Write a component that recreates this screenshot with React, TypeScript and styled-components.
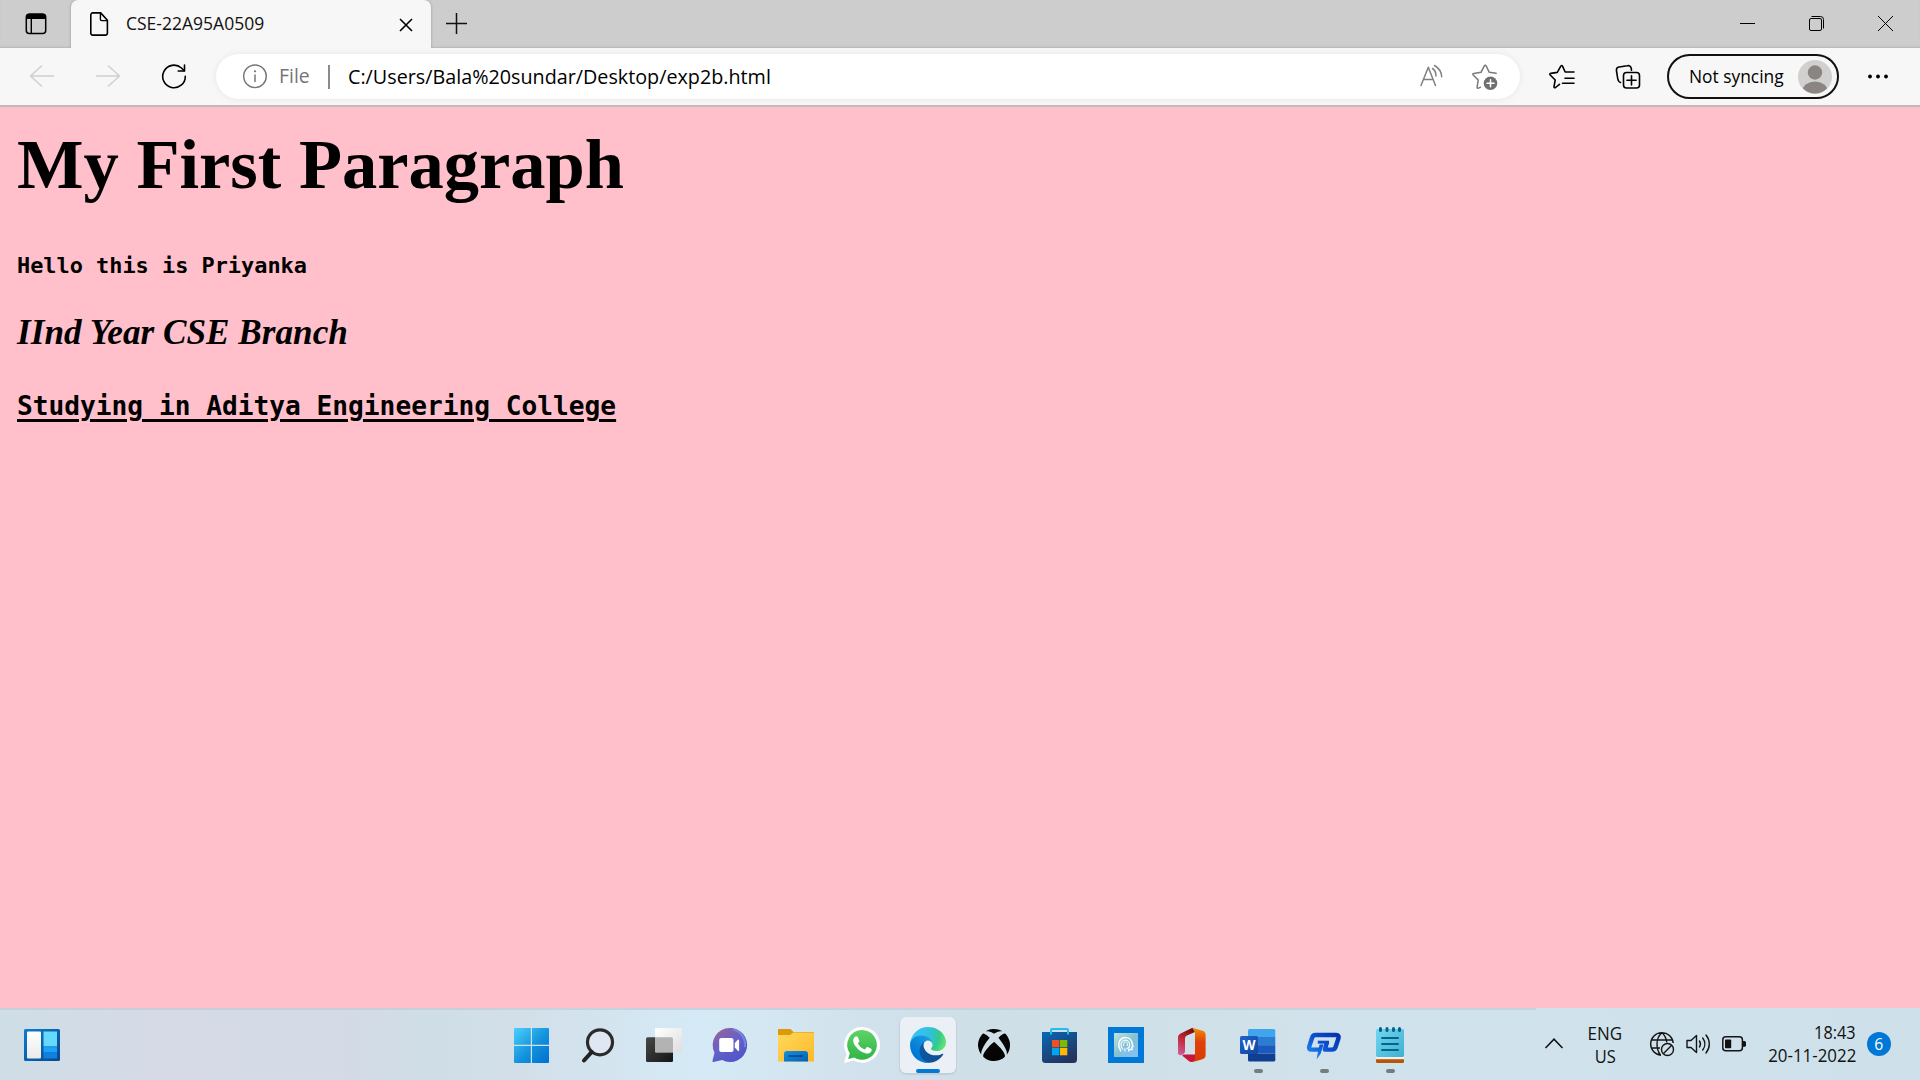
import React from 'react';
import styled, { createGlobalStyle } from 'styled-components';
import { FaXbox } from 'react-icons/fa';

const Global = createGlobalStyle`
  * { box-sizing: border-box; }
  body { margin: 0; overflow: hidden; }
`;

const Screen = styled.div`
  width: 1920px;
  height: 1080px;
  display: flex;
  flex-direction: column;
  overflow: hidden;
  font-family: "Open Sans", "Noto Sans", sans-serif;
  color: #000;
`;

/* One line of interface text, squeezed horizontally to a humanist UI width. */
const Label = styled.span<{ $size: number; $squeeze: number; $color?: string; $end?: boolean; $mid?: boolean }>`
  display: block;
  white-space: nowrap;
  font-size: ${p => p.$size}px;
  line-height: 24px;
  color: ${p => p.$color ?? '#000'};
  transform: scaleX(${p => p.$squeeze});
  transform-origin: ${p => (p.$end ? 'right' : p.$mid ? 'center' : 'left')} center;
`;

const Svg = styled.svg<{ $w: number; $h: number }>`
  display: block;
  flex: none;
  width: ${p => p.$w}px;
  height: ${p => p.$h}px;
  overflow: visible;
  fill: none;
`;

/* ---------- Tab strip ---------- */
const TabStrip = styled.header`
  height: 48px;
  flex: none;
  display: flex;
  background: #cdcdcd;
  box-shadow: inset 0 -2px 2px -1px #b5b5b5;
`;
const TabActions = styled.div`
  width: 71px;
  padding: 13px 0 0 25px;
`;
const Tab = styled.div`
  width: 360px;
  height: 48px;
  display: flex;
  align-items: flex-start;
  padding: 12px 18px 0 19px;
  background: #f7f7f7;
  border-radius: 7px 7px 0 0;
  box-shadow: 0 0 3px rgba(0, 0, 0, 0.25);
  clip-path: inset(0 -4px 0 -4px);
`;
const TabTitle = styled.div`
  width: 273px;
  margin: -1px 0 0 17px;
`;
const CloseTab = styled.div`
  padding-top: 6px;
`;
const NewTab = styled.div`
  padding: 13px 0 0 15px;
  flex: 1;
`;
const WindowButtons = styled.div`
  display: grid;
  grid-template-columns: repeat(3, 69px);
  justify-items: center;
  padding-top: 16px;
  width: 207px;
`;

/* ---------- Toolbar ---------- */
const Toolbar = styled.nav`
  height: 59px;
  flex: none;
  display: flex;
  align-items: flex-start;
  padding: 6px 9px 0;
  background: #f7f7f7;
  border-bottom: 2px solid #bcbcbc;
`;
const ToolSlot = styled.div`
  width: 66px;
  height: 45px;
  flex: none;
  display: flex;
  justify-content: center;
`;
const AddressBar = styled.div`
  width: 1304px;
  height: 45px;
  flex: none;
  margin: 0 9px;
  padding: 0 16px 0 21px;
  border-radius: 23px;
  background: #fff;
  box-shadow: 0 0 7px rgba(0, 0, 0, 0.07);
  display: flex;
  align-items: center;
`;
const Scheme = styled.div`
  width: 49px;
  margin-left: 6px;
  padding-bottom: 1px;
`;
const Divider = styled.div`
  width: 2px;
  height: 24px;
  background: #8a8a8a;
`;
const Url = styled.div`
  flex: 1;
  margin-left: 18px;
  padding-bottom: 2px;
`;
const AddressActions = styled.div`
  display: flex;
  gap: 18px;
`;
const Profile = styled.button`
  width: 172px;
  height: 45px;
  flex: none;
  margin: 0 6px;
  padding: 0 5px 0 20px;
  border: 2px solid #111;
  border-radius: 23px;
  background: transparent;
  font-family: inherit;
  display: flex;
  align-items: center;
  justify-content: space-between;
`;
const ProfileName = styled.div`
  width: 94px;
  padding-bottom: 1px;
`;

/* ---------- Document ---------- */
const Page = styled.main`
  flex: 1;
  padding-left: 17px;
  background: #ffc0cb;
  display: flex;
  flex-direction: column;
  font-family: "Liberation Serif", serif;
  font-weight: bold;
`;
const Title = styled.h1`
  margin: 15px 0 0;
  font-size: 70.5px;
  line-height: 84px;
`;
const Hello = styled.p`
  margin: 45px 0 0;
  font: bold 21.9px/30px "DejaVu Sans Mono", monospace;
`;
const Year = styled.p`
  margin: 31px 0 0;
  font-size: 35.2px;
  line-height: 42px;
  font-style: italic;
`;
const College = styled.p`
  margin: 34px 0 0;
  font: bold 26.2px/36px "DejaVu Sans Mono", monospace;
  text-decoration: underline;
  text-decoration-thickness: 3px;
  text-underline-offset: 4px;
`;

/* ---------- Taskbar ---------- */
const Taskbar = styled.footer`
  height: 72px;
  flex: none;
  display: grid;
  grid-template-columns: 499px 924px 1fr;
  background: linear-gradient(90deg, #cfdee6 0, #d5dae6 150px, #d4dae6 340px, #cfdee6 430px, #d2dfe9 520px, #d5eaf6 700px, #d2e2ec 860px, #cfdfe8 980px, #d0e2eb 1400px, #cee0e9 100%);
`;
const Widgets = styled.div`
  border-top: 2px solid #c8cfdc;
  padding: 19px 0 0 24px;
`;
const Apps = styled.div`
  display: grid;
  grid-template-columns: repeat(14, 66px);
  border-top: 2px solid #c6d3de;
`;
const AppCell = styled.div<{ $active?: boolean }>`
  width: 56px;
  height: 56px;
  margin: 7px 5px;
  border-radius: 6px;
  background: ${p => (p.$active ? '#eaf0f6' : 'transparent')};
  box-shadow: ${p => (p.$active ? '0 1px 1px 1px #c3d0da' : 'none')};
  display: flex;
  flex-direction: column;
  align-items: center;
  padding-top: 10px;
  gap: 6px;
`;
const Running = styled.div<{ $active?: boolean }>`
  width: ${p => (p.$active ? 24 : 9)}px;
  height: 5px;
  border-radius: 3px;
  background: ${p => (p.$active ? '#0078d7' : '#757d83')};
`;
const Tray = styled.div`
  display: flex;
  align-items: flex-start;
`;
const TrayEdge = styled.div`
  width: 113px;
  height: 2px;
  background: #c6d3de;
`;
const Overflow = styled.div`
  width: 18px;
  margin: 30px 0 0 9px;
`;
const Language = styled.div`
  width: 60px;
  margin: 13px 0 0 12px;
  display: flex;
  flex-direction: column;
  align-items: center;
`;
const Status = styled.div`
  display: flex;
  gap: 12px;
  margin: 24px 0 0 15px;
`;
const Clock = styled.div`
  width: 92px;
  margin: 12px 0 0 18px;
  display: flex;
  flex-direction: column;
  align-items: flex-end;
`;
const Badge = styled.div`
  width: 24px;
  height: 24px;
  margin: 24px 0 0 11px;
  border-radius: 50%;
  background: #0078d7;
  display: flex;
  justify-content: center;
`;
const TightRow = styled.div`
  height: 23px;
`;

const EdgeIcon = () => (
  <Svg $w={36} $h={36} viewBox="0 0 256 256">
    <defs>
      <linearGradient id="e1" x1="63" y1="177" x2="241" y2="177" gradientUnits="userSpaceOnUse">
        <stop stopColor="#0c59a4" /><stop offset="1" stopColor="#114a8b" />
      </linearGradient>
      <linearGradient id="e2" x1="157" y1="100" x2="46" y2="221" gradientUnits="userSpaceOnUse">
        <stop stopColor="#1b9de2" /><stop offset=".16" stopColor="#1595df" /><stop offset=".67" stopColor="#0680d7" /><stop offset="1" stopColor="#0078d4" />
      </linearGradient>
      <radialGradient id="e3" cx="26" cy="45" r="245" gradientUnits="userSpaceOnUse">
        <stop stopColor="#35c1f1" /><stop offset=".3" stopColor="#34c1ed" /><stop offset=".55" stopColor="#2fc2d0" /><stop offset=".75" stopColor="#36c98a" /><stop offset="1" stopColor="#66eb6e" />
      </radialGradient>
    </defs>
    <path fill="url(#e1)" transform="translate(-4.63 -4.92)" d="M235.68 195.46a93.73 93.73 0 0 1-10.54 4.71 101.87 101.87 0 0 1-35.9 6.46c-47.32 0-88.54-32.55-88.54-74.32A31.48 31.48 0 0 1 117.13 105c-42.8 1.8-53.8 46.4-53.8 72.53 0 73.88 68.09 81.37 82.76 81.37 7.91 0 19.84-2.3 27-4.56l1.31-.44a128.34 128.34 0 0 0 66.6-52.8 4 4 0 0 0-5.32-5.64z" />
    <path fill="url(#e2)" transform="translate(-4.63 -4.92)" d="M110.34 246.34A79.2 79.2 0 0 1 87.6 225a80.72 80.72 0 0 1 29.53-120c3.12-1.47 8.45-4.13 15.54-4a32.35 32.35 0 0 1 25.69 13 31.88 31.88 0 0 1 6.36 18.66c0-.21 24.46-79.6-80-79.6-43.9 0-80 41.66-80 78.21a130.15 130.15 0 0 0 12.11 56 128 128 0 0 0 156.38 67.11 75.55 75.55 0 0 1-62.78-8z" />
    <path fill="url(#e3)" d="M152.33 148.86c-.81 1.05-3.3 2.5-3.3 5.66 0 2.61 1.7 5.12 4.72 7.23 14.38 10 41.49 8.68 41.56 8.68a59.56 59.56 0 0 0 30.27-8.35 61.38 61.38 0 0 0 30.43-52.88c.26-22.41-8-37.31-11.34-43.91C223.46 23.84 177.72 0 128 0A128 128 0 0 0 0 126.2c.48-36.54 36.8-66.05 80-66.05 3.5 0 23.46.34 42 10.07 16.34 8.58 24.9 18.94 30.85 29.21 6.18 10.67 7.28 24.15 7.28 29.52s-2.74 13.33-7.8 19.91z" />
  </Svg>
);

const Glyph = ({ children }: { children: React.ReactNode }) => (
  <Svg $w={36} $h={36} viewBox="0 0 36 36">{children}</Svg>
);

const StartIcon = () => (
  <Glyph>
    <defs><linearGradient id="st" x1="0" y1="1" x2="35" y2="36" gradientUnits="userSpaceOnUse"><stop stopColor="#4cd0fb" /><stop offset=".55" stopColor="#1292dd" /><stop offset="1" stopColor="#0070d0" /></linearGradient></defs>
    <path fill="url(#st)" d="M1 1h15.8v16.8H0V2a1 1 0 0 1 1-1zM18 1h16a1 1 0 0 1 1 1v15.8H18zM0 19h16.8v17H1a1 1 0 0 1-1-1zM18 19h17v16a1 1 0 0 1-1 1H18z" />
  </Glyph>
);
const SearchIcon = () => (
  <Glyph>
    <circle cx="20" cy="15.3" r="12.5" stroke="#2b2b2b" strokeWidth="3.2" fill="#dfe8f2" />
    <path d="M4 33.5l7.8-8.6" stroke="#222" strokeWidth="4" strokeLinecap="round" />
  </Glyph>
);
const TaskViewIcon = () => (
  <Glyph>
    <defs>
      <linearGradient id="tv" x1="0" y1="0" x2="1" y2="1"><stop stopColor="#484848" /><stop offset="1" stopColor="#151515" /></linearGradient>
      <linearGradient id="tw" x1="0" y1="0" x2="1" y2="1"><stop stopColor="#fff" /><stop offset="1" stopColor="#dedede" /></linearGradient>
    </defs>
    <rect x="0" y="10.3" width="27" height="24.6" rx="1.5" fill="url(#tv)" />
    <rect x="9" y="1" width="27" height="24.5" rx="1" fill="url(#tw)" />
    <path d="M9 10.3h16.5a1.5 1.5 0 0 1 1.5 1.5V25H9z" fill="#b3b3b3" />
  </Glyph>
);
const ChatIcon = () => (
  <Glyph>
    <defs><linearGradient id="ch" x1=".2" y1=".1" x2=".7" y2=".9"><stop stopColor="#8d62a4" /><stop offset=".5" stopColor="#6461c8" /><stop offset="1" stopColor="#5356c8" /></linearGradient></defs>
    <path fill="url(#ch)" d="M17.5 1A17 17 0 1 1 10.2 33L1.5 35a1 1 0 0 1-1-1.3l2-8A17 17 0 0 1 17.5 1z" />
    <path d="M21 2.4A16 16 0 0 1 33 20" stroke="#7b96ec" strokeWidth="2" opacity=".7" />
    <rect x="7.2" y="11" width="14.3" height="14" rx="2" fill="#fff" />
    <path fill="#fff" d="M22.8 16l3-3.2a.8.8 0 0 1 1.3.6v9.8a.8.8 0 0 1-1.3.6l-3-3.2z" />
  </Glyph>
);
const FolderIcon = () => (
  <Glyph>
    <defs>
      <linearGradient id="fo" x1="0" y1="0" x2="1" y2="1"><stop stopColor="#ffd95e" /><stop offset="1" stopColor="#fdb827" /></linearGradient>
      <linearGradient id="fb" x1="0" y1="0" x2="1" y2="1"><stop stopColor="#1390e0" /><stop offset="1" stopColor="#0560b4" /></linearGradient>
    </defs>
    <path fill="#dc9a05" d="M1 2h11.5l3 3H35a1 1 0 0 1 1 1v10H0V3a1 1 0 0 1 1-1z" />
    <path fill="url(#fo)" d="M0 8h12l3.4-2.6H35a1 1 0 0 1 1 1v28H0z" />
    <path fill="url(#fb)" d="M6 34.4V27a3 3 0 0 1 3-3h18a3 3 0 0 1 3 3v7.4z" />
    <path d="M10.5 29h14.5" stroke="#06478c" strokeWidth="1.6" />
  </Glyph>
);
const WhatsAppIcon = () => (
  <Glyph>
    <defs><linearGradient id="wa" x1="0" y1="0" x2="0" y2="1"><stop stopColor="#5fd267" /><stop offset="1" stopColor="#31b446" /></linearGradient></defs>
    <path fill="#fff" d="M18 0a17.9 17.9 0 1 1-8.4 33.6L0 36l2.5-9.3A17.9 17.9 0 0 1 18 0z" />
    <path fill="url(#wa)" d="M18 3a14.9 14.9 0 1 1-7.8 27.6L4.2 32l1.6-5.8A14.9 14.9 0 0 1 18 3z" />
    <path fill="#fff" transform="translate(0 -.4) scale(1.53)" d="M17.472 14.382c-.297-.149-1.758-.867-2.03-.967-.273-.099-.471-.148-.67.15-.197.297-.767.966-.94 1.164-.173.199-.347.223-.644.075-.297-.15-1.255-.463-2.39-1.475-.883-.788-1.48-1.761-1.653-2.059-.173-.297-.018-.458.13-.606.134-.133.298-.347.446-.52.149-.174.198-.298.298-.497.099-.198.05-.371-.025-.52-.075-.149-.669-1.612-.916-2.207-.242-.579-.487-.5-.669-.51-.173-.008-.371-.01-.57-.01-.198 0-.52.074-.792.372-.272.297-1.04 1.016-1.04 2.479 0 1.462 1.065 2.875 1.213 3.074.149.198 2.096 3.2 5.077 4.487.709.306 1.262.489 1.694.625.712.227 1.36.195 1.871.118.571-.085 1.758-.719 2.006-1.413.248-.694.248-1.289.173-1.413-.074-.124-.272-.198-.57-.347" />
  </Glyph>
);
const XboxIcon = () => (
  <Glyph><FaXbox x={1.5} y={1.5} size={33} color="#050505" /></Glyph>
);
const StoreIcon = () => (
  <Glyph>
    <defs><linearGradient id="so" x1="0" y1="0" x2=".6" y2="1"><stop stopColor="#0669b6" /><stop offset="1" stopColor="#24345f" /></linearGradient></defs>
    <path fill="url(#so)" d="M0 5h35v27.5a3.5 3.5 0 0 1-3.5 3.5h-28A3.5 3.5 0 0 1 0 32.5z" />
    <path d="M9 7.5V3.2A1.2 1.2 0 0 1 10.2 2h14.6a1.2 1.2 0 0 1 1.2 1.2v4.3" stroke="#22bdf0" strokeWidth="2" />
    <path fill="#f25022" d="M10 13h7.3v7.3H10z" /><path fill="#7fba00" d="M18 13h7.3v7.3H18z" />
    <path fill="#00a4ef" d="M10 21h7.3v7.3H10z" /><path fill="#ffb900" d="M18 21h7.3v7.3H18z" />
  </Glyph>
);
const MindIcon = () => (
  <Glyph>
    <defs><linearGradient id="mi" x1="0" y1="0" x2="1" y2="1"><stop stopColor="#c4e2dc" /><stop offset=".5" stopColor="#84c3d2" /><stop offset="1" stopColor="#7dbcf0" /></linearGradient></defs>
    <path fill="#0078d7" d="M0 0h36v36H0z" />
    <path fill="url(#mi)" d="M6 6h24v24H6z" />
    <path fill="#86c0f3" d="M12 25l12-8 6 7v6H16z" opacity=".7" />
    <path d="M12.5 24.500c.5-1.800-1.800-3.500-1.800-7 0-4 2.900-7 6.700-7s6.400 2.600 6.700 6l.8 3-1 .6v2.300h-3.200v2" stroke="#fff" strokeWidth="1.5" />
    <path d="M15.2 22.500c-1.400-1.300-2.200-3-2.200-4.700 0-2.600 1.900-4.600 4.300-4.600s4.300 1.900 4.300 4.300-1.400 4-3.300 4M17 24.500v-3" stroke="#f2fbff" strokeWidth="1.2" />
    <path d="M15.6 19v-2.200a1.900 1.900 0 0 1 3.800 0V19" stroke="#e8f7fb" strokeWidth="1" />
  </Glyph>
);
const OfficeIcon = () => (
  <Glyph>
    <defs>
      <linearGradient id="of" x1="0" y1="0" x2="0" y2="1"><stop stopColor="#f39200" /><stop offset=".4" stopColor="#e0420a" /><stop offset="1" stopColor="#da3b02" /></linearGradient>
      <linearGradient id="og" x1=".6" y1="0" x2=".2" y2="1"><stop stopColor="#7c0d10" /><stop offset=".5" stopColor="#c42a3a" /><stop offset="1" stopColor="#cf5a9d" /></linearGradient>
    </defs>
    <path fill="url(#og)" d="M18.5.8L21 5l-7.500 3.200c-1.500.7-2.500 1.700-2.500 3.300V24c0 1.500-.6 2.300-1.800 3l-1.800 1C5.500 28.800 4 27.500 4 26V10.500C4 8.600 5 7.200 6.600 6.400z" />
    <path fill="#c8163a" d="M9 29.300c-1-.6-.8-1.800.5-1.800H21l4 4.200-6.200 3c-1.200.6-2.300.5-3.400-.1z" />
    <path fill="url(#of)" d="M18.3.7l10.200 3.100A4.300 4.300 0 0 1 31.6 8v20a4.300 4.300 0 0 1-3.1 4.200L18 35.200c1.900-.8 3-2 3-4V5z" />
  </Glyph>
);
const WordLetter = styled.text`
  font: bold 13.5px "Open Sans", sans-serif;
  fill: #fff;
`;
const WordIcon = () => (
  <Glyph>
    <defs><linearGradient id="wd" x1="0" y1="0" x2="1" y2="1"><stop stopColor="#2262cc" /><stop offset="1" stopColor="#0f46a0" /></linearGradient></defs>
    <path fill="#41a5ee" d="M9.5 2h24.3a1.5 1.5 0 0 1 1.5 1.5V10H8V3.500A1.5 1.5 0 0 1 9.5 2z" />
    <path fill="#2b7cd3" d="M8 10h27.3v8.200H8z" /><path fill="#185abd" d="M8 18.200h27.3v8.200H8z" />
    <path fill="#103f91" d="M8 26.400h27.3v6.500a1.5 1.5 0 0 1-1.5 1.5H9.500A1.5 1.5 0 0 1 8 32.900z" />
    <rect x="0" y="9" width="18" height="18" rx="1.5" fill="url(#wd)" />
    <WordLetter x="9" y="22.7" textAnchor="middle">W</WordLetter>
  </Glyph>
);
const PIcon = () => (
  <Glyph>
    <defs><linearGradient id="pi" x1="30" y1="6" x2="8" y2="32" gradientUnits="userSpaceOnUse"><stop stopColor="#0534ae" /><stop offset=".5" stopColor="#0b50cf" /><stop offset="1" stopColor="#2088f2" /></linearGradient></defs>
    <g stroke="url(#pi)" strokeWidth="4.4" strokeLinejoin="round">
      <path d="M13.5 22.600H5.200c-1.800 0-2.600-1-2.100-2.700l3-9.200c.6-1.800 1.700-2.700 3.500-2.700h20.600c2 0 2.900 1.100 2.300 3l-2.900 9c-.6 1.800-1.700 2.600-3.500 2.600h-7.300l2.200-7.200" />
      <path d="M11.800 15.200H23" strokeWidth="3" />
    </g>
    <path fill="url(#pi)" d="M13.6 17.500h4L14.500 27l-4 5.500 1.500-7.500z" />
  </Glyph>
);
const NotepadIcon = () => (
  <Glyph>
    <defs><linearGradient id="np" x1="0" y1="0" x2="1" y2="1"><stop stopColor="#71d7f2" /><stop offset="1" stopColor="#3fb0cf" /></linearGradient></defs>
    <path fill="#b65708" d="M4 28h28v6.500a1.5 1.5 0 0 1-1.5 1.5h-25A1.5 1.5 0 0 1 4 34.500z" />
    <path fill="#f1eeee" d="M4 26h28v6.200H4z" />
    <path fill="url(#np)" d="M5.5 2h25A1.5 1.5 0 0 1 32 3.500V28.500A1.5 1.5 0 0 1 30.500 30h-25A1.5 1.5 0 0 1 4 28.500V3.500A1.5 1.5 0 0 1 5.500 2z" />
    <path d="M8.5 1.500v2M15 1.500v2M21.500 1.500v2M27.500 1.500v2" stroke="#07628a" strokeWidth="3" strokeLinecap="round" />
    <path d="M10 11h16M10 17h16M10 23h16" stroke="#06648c" strokeWidth="2" strokeLinecap="round" />
  </Glyph>
);

const apps: { name: string; Icon: () => React.ReactElement; active?: boolean; running?: boolean }[] = [
  { name: 'start', Icon: StartIcon },
  { name: 'search', Icon: SearchIcon },
  { name: 'taskview', Icon: TaskViewIcon },
  { name: 'chat', Icon: ChatIcon },
  { name: 'explorer', Icon: FolderIcon },
  { name: 'whatsapp', Icon: WhatsAppIcon },
  { name: 'edge', Icon: EdgeIcon, active: true, running: true },
  { name: 'xbox', Icon: XboxIcon },
  { name: 'store', Icon: StoreIcon },
  { name: 'mind', Icon: MindIcon },
  { name: 'office', Icon: OfficeIcon },
  { name: 'word', Icon: WordIcon, running: true },
  { name: 'pdf', Icon: PIcon, running: true },
  { name: 'notepad', Icon: NotepadIcon, running: true },
];

const ToolGlyph = ({ children }: { children: React.ReactNode }) => (
  <Svg $w={36} $h={45} viewBox="0 0 36 45" strokeLinecap="round" strokeLinejoin="round">{children}</Svg>
);

export default function App() {
  return (
    <Screen>
      <Global />
      <TabStrip>
        <TabActions>
          <Svg $w={22} $h={22} viewBox="0 0 22 22">
            <rect x="1.3" y="1.2" width="19.4" height="19.4" rx="3" stroke="#000" strokeWidth="1.5" />
            <path fill="#000" d="M1 6V4a3.5 3.5 0 0 1 3.5-3.5h13A3.5 3.5 0 0 1 21 4v2z" />
            <path d="M6.3 6v14.500" stroke="#000" strokeWidth="1.4" />
          </Svg>
        </TabActions>
        <Tab>
          <Svg $w={19} $h={24} viewBox="0 0 19 24" strokeLinejoin="round">
            <path d="M2.8.9h7.9l6.700 7.300v12.900a2 2 0 0 1-2 2H2.800a2 2 0 0 1-2-2V2.900a2 2 0 0 1 2-2z" stroke="#000" strokeWidth="1.6" />
            <path d="M10.4 1v6.300a1.3 1.3 0 0 0 1.3 1.300h5.700" stroke="#000" strokeWidth="1.4" />
          </Svg>
          <TabTitle><Label $size={17.5} $squeeze={1} $color="#111">CSE-22A95A0509</Label></TabTitle>
          <CloseTab>
            <Svg $w={14} $h={14} viewBox="0 0 14 14">
              <path d="M1 1l12 12M13 1L1 13" stroke="#000" strokeWidth="1.6" />
            </Svg>
          </CloseTab>
        </Tab>
        <NewTab>
          <Svg $w={21} $h={21} viewBox="0 0 21 21">
            <path d="M10.5 0v21M0 10.500h21" stroke="#111" strokeWidth="1.5" />
          </Svg>
        </NewTab>
        <WindowButtons>
          <Svg $w={15} $h={15} viewBox="0 0 15 15"><path d="M0 7.500h15" stroke="#000" /></Svg>
          <Svg $w={15} $h={15} viewBox="0 0 15 15">
            <rect x=".5" y="2.5" width="12" height="12" rx="1.5" stroke="#000" />
            <path d="M2.500.5h9a3 3 0 0 1 3 3v9" stroke="#000" />
          </Svg>
          <Svg $w={15} $h={15} viewBox="0 0 15 15"><path d="M0 0l15 15M15 0L0 15" stroke="#000" /></Svg>
        </WindowButtons>
      </TabStrip>

      <Toolbar>
        <ToolSlot><ToolGlyph><path d="M29.5 22H6.500M17.500 12l-11 10 11 10" stroke="#cfcfcf" strokeWidth="1.5" /></ToolGlyph></ToolSlot>
        <ToolSlot><ToolGlyph><path d="M6.5 22h23M18.500 12l11 10-11 10" stroke="#cfcfcf" strokeWidth="1.5" /></ToolGlyph></ToolSlot>
        <ToolSlot>
          <ToolGlyph>
            <path d="M29.3 22.200A11.3 11.3 0 1 1 25.500 14l2.700 2.800" stroke="#000" strokeWidth="1.6" />
            <path d="M28.5 11v6h-6.300" stroke="#000" strokeWidth="1.6" />
          </ToolGlyph>
        </ToolSlot>
        <AddressBar>
          <ToolGlyph>
            <circle cx="18" cy="22.3" r="11.3" stroke="#767676" strokeWidth="1.4" />
            <path d="M18 21v6.500" stroke="#767676" strokeWidth="1.5" /><circle cx="18" cy="17.3" r="1.1" fill="#767676" />
          </ToolGlyph>
          <Scheme><Label $size={20} $squeeze={0.97} $color="#757575">File</Label></Scheme>
          <Divider />
          <Url><Label $size={20.5} $squeeze={0.963}>C:/Users/Bala%20sundar/Desktop/exp2b.html</Label></Url>
          <AddressActions>
            <ToolGlyph>
              <path d="M7 31.500l7.300-18.300 7.200 18.300M9.500 25.500h9.500" stroke="#808080" strokeWidth="1.5" />
              <path d="M18.5 14.500c2.300 1.500 3.500 4.500 3.500 7.500M20.500 11.500c4 2.300 7 6.500 7.200 11.300" stroke="#808080" strokeWidth="1.5" />
            </ToolGlyph>
            <ToolGlyph>
              <path d="M12.5 33.200l-2 1c-.8.4-1.500-.2-1.400-1l1.100-7.200-5-5c-.6-.6-.3-1.500.5-1.600l7.300-1.100 3.300-6.400c.4-.8 1.400-.8 1.800 0l3.200 6.400 6.800 1" stroke="#7a7a7a" strokeWidth="1.5" />
              <circle cx="22.5" cy="29.3" r="6.8" fill="#6f6f6f" />
              <path d="M22.5 25.800v7M19 29.300h7" stroke="#fff" strokeWidth="1.5" />
            </ToolGlyph>
          </AddressActions>
        </AddressBar>
        <ToolSlot>
          <ToolGlyph>
            <path d="M15.5 30.300l-4 3.200c-.9.6-1.700 0-1.500-.9l1.200-6.600-5-5c-.6-.7-.3-1.500.5-1.600l6.600-1 3.500-6.300c.4-.8 1.300-.8 1.700 0l2.700 5.900H30M21 24.300h9M18.500 29.300H30" stroke="#000" strokeWidth="1.6" />
          </ToolGlyph>
        </ToolSlot>
        <ToolSlot>
          <ToolGlyph>
            <path d="M10.5 28.500C8.800 28 8 26.500 7.700 24.500L6.500 17c-.4-2.300.6-3.600 2.600-4l8.200-1.300c2.200-.4 3.600.5 4 2.800l.2 1.800" stroke="#000" strokeWidth="1.6" />
            <rect x="13.5" y="18.5" width="16" height="15.5" rx="3" stroke="#000" strokeWidth="1.6" />
            <path d="M21.5 21.700v9.200M16.900 26.300h9.200" stroke="#000" strokeWidth="1.6" />
          </ToolGlyph>
        </ToolSlot>
        <Profile>
          <ProfileName><Label $size={18} $squeeze={0.965}>Not syncing</Label></ProfileName>
          <Svg $w={34} $h={34} viewBox="0 0 34 34">
            <defs><clipPath id="face"><circle cx="17" cy="17" r="16.5" /></clipPath></defs>
            <circle cx="17" cy="17" r="17" fill="#d2d0ce" />
            <g clipPath="url(#face)" fill="#8a8583"><circle cx="17" cy="12.5" r="7.2" /><ellipse cx="17" cy="31" rx="12.5" ry="9.5" /></g>
          </Svg>
        </Profile>
        <ToolSlot>
          <ToolGlyph><g fill="#000"><circle cx="10" cy="22.5" r="1.9" /><circle cx="18" cy="22.5" r="1.9" /><circle cx="26" cy="22.5" r="1.9" /></g></ToolGlyph>
        </ToolSlot>
      </Toolbar>

      <Page>
        <Title>My First Paragraph</Title>
        <Hello>Hello this is Priyanka</Hello>
        <Year>IInd Year CSE Branch</Year>
        <College>Studying in Aditya Engineering College</College>
      </Page>

      <Taskbar>
        <Widgets>
          <Svg $w={36} $h={32} viewBox="0 0 36 32">
            <defs>
              <linearGradient id="wg" x1="0" y1="0" x2="1" y2="1"><stop stopColor="#0c7dd2" /><stop offset="1" stopColor="#0b4788" /></linearGradient>
              <linearGradient id="wh" x1="0" y1="0" x2="0" y2="1"><stop stopColor="#fff" /><stop offset="1" stopColor="#eaeaea" /></linearGradient>
            </defs>
            <rect width="36" height="32" rx="1.5" fill="url(#wg)" />
            <rect x="3" y="2.5" width="14" height="27" rx="1" fill="url(#wh)" />
            <path fill="#66d9ff" d="M19.5 2.500H33v15H19.500z" /><path fill="#2397ea" d="M19.5 17.500H33V19H19.500z" />
            <path fill="#1ba3fb" d="M19.5 19H33v4.500H19.500z" /><path fill="#0f80e0" d="M19.5 23.500H33v6H19.500z" />
          </Svg>
        </Widgets>
        <Apps>
          {apps.map(({ name, Icon, active, running }) => (
            <AppCell key={name} $active={active}>
              <Icon />
              {running && <Running $active={active} />}
            </AppCell>
          ))}
        </Apps>
        <Tray>
          <TrayEdge />
          <Overflow><Svg $w={18} $h={11} viewBox="0 0 18 11"><path d="M.5 10L9 1.200 17.500 10" stroke="#111" strokeWidth="1.5" /></Svg></Overflow>
          <Language>
            <TightRow><Label $mid $size={17.5} $squeeze={0.97} $color="#111">ENG</Label></TightRow>
            <TightRow><Label $mid $size={17.5} $squeeze={0.94} $color="#111">US</Label></TightRow>
          </Language>
          <Status>
            <Svg $w={24} $h={24} viewBox="0 0 24 24" stroke="#151515" strokeWidth="1.4">
              <path d="M11 23.200A11.3 11.3 0 1 1 23.200 11M1.500 8h21M1.500 16H10M12 .8C8 4 7 8 7 12s1 8 3.500 11M12 .8c3 2.700 4.300 6 4.800 9.700" />
              <circle cx="17.5" cy="17.5" r="6" /><path d="M13.3 21.700l8.400-8.400" />
            </Svg>
            <Svg $w={24} $h={24} viewBox="0 0 24 24" stroke="#151515" strokeWidth="1.4" strokeLinejoin="round" strokeLinecap="round">
              <path d="M1 8.500h4l5.500-5v17L5 15.500H1zM13.500 9c1.200 1.800 1.200 4.200 0 6M16.700 6c2.800 3.600 2.800 8.400 0 12M20 3c4.400 5.400 4.400 12.600 0 18" />
            </Svg>
            <Svg $w={24} $h={24} viewBox="0 0 24 24">
              <rect x=".8" y="4.8" width="19.6" height="14" rx="3" stroke="#151515" strokeWidth="1.5" />
              <rect x="3" y="7.5" width="6.2" height="8.8" rx=".8" fill="#111" /><path fill="#111" d="M21 9h1.500A1.5 1.5 0 0 1 24 10.500v2.800a1.5 1.5 0 0 1-1.5 1.500H21z" />
            </Svg>
          </Status>
          <Clock>
            <TightRow><Label $end $size={17.5} $squeeze={0.93} $color="#111">18:43</Label></TightRow>
            <TightRow><Label $end $size={17.5} $squeeze={0.965} $color="#111">20-11-2022</Label></TightRow>
          </Clock>
          <Badge><Label $mid $size={16.5} $squeeze={0.95} $color="#fff">6</Label></Badge>
        </Tray>
      </Taskbar>
    </Screen>
  );
}
